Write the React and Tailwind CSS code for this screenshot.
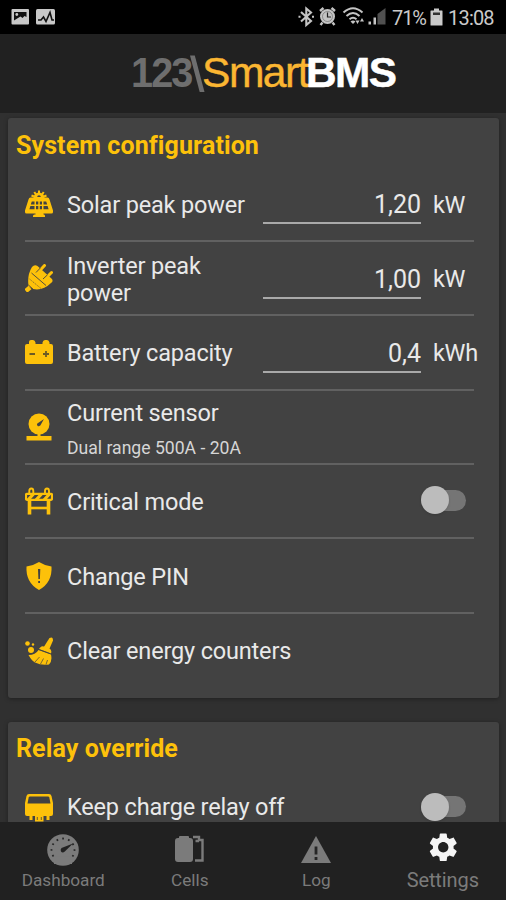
import React from 'react';

const Y = '#fdc10a';
const D = '#424242';

function Solar() {
  return (
    <svg width="28" height="28" viewBox="0 0 28 28" fill={Y}>
      <path d="M5.500 7.500H22.500Q24 7.500 24.500 9.500L28 20.500V22Q28 23.500 26.500 23.500H18.500V24.500H19Q20 24.500 20 26V27H8V26Q8 24.500 9.500 24.500H10.500V23.500H1.500Q0 23.500 0 22V20.500L3.500 9.500Q4 7.500 5.500 7.500Z" />
      <path d="M8.500 8A5.500 5.500 0 0 1 19.500 8Z" />
      <path d="M14 .5V4M9.300 2L10.800 4.300M18.700 2L17.200 4.300M6.500 5.500L9 6.500M21.500 5.500L19 6.500" stroke={Y} strokeWidth="2" />
      <path d="M12.200 7A1.800 1.800 0 0 1 15.800 7Z" fill={D} />
      <path d="M6.800 11.500H9.500V14.500H5.800ZM11 11.500H13.300V14.500H11ZM14.800 11.500H17V14.500H14.800ZM18.500 11.500H21.200L22.200 14.500H18.500ZM5.400 16H9.500V19.200H4.400ZM11 16H13.300V19.200H11ZM14.800 16H17V19.200H14.800ZM18.500 16H22.600L23.600 19.200H18.500Z" fill={D} />
    </svg>
  );
}

function Plug() {
  return (
    <svg width="28" height="28" viewBox="0 0 28 28" fill={Y}>
      <path d="M3.500 22Q2 11 7 3Q9.500 0 12.500 2L27 15Q28.500 17.500 26 19Q18 27 8 25Z" />
      <path d="M12.500 9L19.500 1.500M19.500 15.500L26.500 8.500" stroke={Y} strokeWidth="3" strokeLinecap="round" />
      <path d="M11 8.500L15.500 3.800M18 15L22.500 10.800" stroke={D} strokeWidth=".9" />
      <path d="M6.500 9L21 21.500" stroke={D} strokeWidth=".9" />
      <path d="M4.500 15L16 24.500" stroke={D} strokeWidth=".6" strokeDasharray="1.500 .8" />
      <path d="M3.500 21L8 25" stroke={D} strokeWidth=".8" />
      <path d="M.8 27L5 23.500" stroke={Y} strokeWidth="4.500" />
    </svg>
  );
}

function Battery() {
  return (
    <svg width="28" height="28" viewBox="0 0 28 28" fill={Y}>
      <path d="M4 6V4Q4 2 6 2H8Q10 2 10.500 4.500V6H17.500V4.500Q18 2 20 2H22Q24 2 24.500 4.500V6H26Q28 6 28 8V24Q28 26 26 26H2Q0 26 0 24V8Q0 6 2 6Z" />
      <path d="M4.500 16H10M18 16H24M21 13V19" stroke="#6b5a25" strokeWidth="1.800" fill="none" />
    </svg>
  );
}

function Sensor() {
  return (
    <svg width="28" height="28" viewBox="0 0 28 28" fill={Y}>
      <circle cx="14" cy="11" r="10.500" />
      <path d="M12.500 20H15.500V23H26.500V27.500H1.500V23H12.500Z" />
      <path d="M12.300 10.500L19 6L15.300 12.500Q13.500 14 12.500 12.700Q11.500 11.700 12.300 10.500Z" fill={D} />
    </svg>
  );
}

function Barrier() {
  return (
    <svg width="28" height="28" viewBox="0 0 28 28" fill="none" stroke={Y}>
      <path d="M4.300 6.500V4Q4.300 1.500 6.300 1.500Q8.300 1.500 8.300 4V6.500M20 6.500V4Q20 1.500 22 1.500Q24 1.500 24 4V6.500" strokeWidth="1.900" />
      <rect x="1" y="6.800" width="26" height="6" rx="1" strokeWidth="2.200" />
      <path d="M3 13L8.500 7M11 13L16.500 7M19 13L24.500 7" strokeWidth="3.200" />
      <path d="M4.500 13V27.500M23.500 13V27.500" strokeWidth="3.600" />
      <path d="M4.500 21H23.500" strokeWidth="2.600" />
    </svg>
  );
}

function Shield() {
  return (
    <svg width="28" height="28" viewBox="0 0 28 28" fill={Y}>
      <path d="M14 0Q20 3.800 26.500 4.500Q27.500 20.500 14 28Q.5 20.500 1.500 4.500Q8 3.800 14 0Z" />
      <path d="M13 7H15.300L14.900 17H13.400ZM13.200 19H15V21H13.200Z" fill={D} />
    </svg>
  );
}

function Broom() {
  return (
    <svg width="28" height="28" viewBox="0 0 28 28" fill={Y}>
      <path d="M24.500 1Q28 -1 28 3.500L23.500 14L17.500 12Z" />
      <path d="M16.500 9.500Q18 8.500 25 12Q27 13.500 26 16.500L14 12Q14.500 10.500 16.500 9.500Z" />
      <path d="M13.500 13L26 17.500Q27.500 24 24 27.500Q16 28.500 10 25.500Q6.500 23.500 3.500 18Q10.500 18 13.500 13Z" />
      <path d="M14 12.500L25.500 16.800M10 25L14.500 20M15.500 27L18.500 21.500M21 27.500L22.500 23" stroke={D} strokeWidth=".7" />
      <circle cx="6" cy="13" r="3" />
      <circle cx="2.500" cy="6.500" r="2.300" />
      <circle cx="8" cy="7.500" r="1.200" />
    </svg>
  );
}

function Relay() {
  return (
    <svg width="28" height="28" viewBox="0 0 28 28" fill={Y}>
      <path d="M4 0H24Q26 0 26.500 2L28 9V20Q28 22 26 22H24.500V26H21.500V22H18.500V27.500H10V22H7.500V26H4.500V22H2Q0 22 0 20V9L1.500 2Q2 0 4 0Z" />
      <path d="M5 2.500H23Q24 2.500 24.300 3.500L25.500 9.500H2.500L3.700 3.500Q4 2.500 5 2.500Z" fill={D} />
      <path d="M12.300 23V26M16.300 23V26" stroke={D} strokeWidth=".8" />
    </svg>
  );
}

function StatusIcons() {
  return (
    <svg width="90" height="22" viewBox="297 7 90 22" fill="#c4c4c4" className="shrink-0">
      <path d="M301 13L311 22L306.300 26V9.500L311 13.500L301 22.500M298.500 17.700H300.500M312 17.700H314" fill="none" stroke="#c4c4c4" strokeWidth="2.100" />
      <circle cx="327.500" cy="17.500" r="7.500" />
      <path d="M320 12L323.500 9M335 12L331.500 9M322.500 23.500L320.500 26M332.500 23.500L334.500 26" stroke="#c4c4c4" strokeWidth="2.400" />
      <path d="M327.500 13.500V18H331" fill="none" stroke="#222" strokeWidth="1.200" />
      <circle cx="327.500" cy="17.500" r="5" fill="none" stroke="#555" strokeWidth=".5" />
      <g fill="none" stroke="#c4c4c4" strokeWidth="2">
        <path d="M343.500 13.500Q353 5 362.500 13.500" />
        <path d="M346.500 17Q353 11 359.500 17" />
        <path d="M349.500 20.300Q353 17.300 356.500 20.300" />
      </g>
      <path d="M350.500 22.500Q353 20.500 355.500 22.500L353 25Z" />
      <path d="M355.500 21.500H359.500L357.500 25ZM360 22.500L362 19L364 22.500Z" />
      <path d="M368.500 22.500H371V25.500H368.500ZM373.500 18.500H376V25.500H373.500Z" />
      <path d="M377.500 15L385.500 9V25.500H377.500Z" fill="#505050" />
    </svg>
  );
}

function StatusBar() {
  return (
    <div className="flex h-[34px] shrink-0 items-center bg-black text-[#cacaca]">
      <svg width="46" height="18" viewBox="0 0 46 18" className="ml-[11px]">
        <rect x="0.500" y="1" width="17.500" height="15.500" rx="1" fill="#c8c8c8" />
        <path d="M3 4H15.500V9L13.500 8L11.500 10L9.500 8.500L7 10L3 12.500Z" fill="#111" />
        <circle cx="5.800" cy="6.500" r="1.400" fill="#c8c8c8" />
        <rect x="25" y="1" width="19" height="15.500" rx="1.500" fill="#c8c8c8" />
        <path d="M27 12H30L32.500 9L35 13.500L39 4.500L41 12H43" fill="none" stroke="#111" strokeWidth="1.600" />
      </svg>
      <div className="ml-auto flex items-center">
        <StatusIcons />
        <span className="ml-[5px] mt-[2px] w-[33px] whitespace-nowrap text-[20px] tracking-[-1.100px]">71%</span>
        <svg width="13" height="18" viewBox="0 0 13 18" className="ml-[5px]">
          <path d="M4 0.500H9V2.500H12Q12.500 2.500 12.500 3V17Q12.500 17.500 12 17.500H1Q.5 17.500 .5 17V3Q.5 2.500 1 2.500H4Z" fill="#cacaca" />
          <path d="M3 4.500H10V7H3Z" fill="#333" />
        </svg>
        <span className="ml-[5px] mr-[11px] mt-[2px] w-[47px] whitespace-nowrap text-[20px] tracking-[-0.800px]">13:08</span>
      </div>
    </div>
  );
}

function Logo() {
  return (
    <svg width="270" height="50" viewBox="130 48 270 50" fontFamily="'Liberation Sans', Arial, sans-serif" fontSize="42">
      <text x="131" y="86.500" fontWeight="700" fill="#6e6e6e" letterSpacing="-2" textLength="60.500" lengthAdjust="spacingAndGlyphs">123</text>
      <path d="M190 55.500H194.800L204.500 92H199.700Z" fill="#6e6e6e" />
      <text x="202" y="86.500" fill="#fbb632" stroke="#fbb632" strokeWidth=".4" letterSpacing="-1.500" textLength="106" lengthAdjust="spacingAndGlyphs">Smart</text>
      <text x="306" y="86.500" fontWeight="700" fill="#fff" stroke="#fff" strokeWidth=".5" letterSpacing="-1.500" textLength="89.500" lengthAdjust="spacingAndGlyphs">BMS</text>
    </svg>
  );
}

function Toggle() {
  return (
    <span className="relative mr-[8px] mt-[-2px] flex h-[28px] w-[45px] items-center justify-end">
      <span className="h-[21px] w-[36px] rounded-full bg-[#757575]" />
      <span className="absolute left-0 top-0 h-[28px] w-[28px] rounded-full bg-[#bcbcbc] shadow-sm" />
    </span>
  );
}

function Row({ icon, label, sub, value, unit, toggle, last }) {
  return (
    <div className={`flex h-[74.400px] items-center ${last ? '' : 'border-b-2 border-[#616161]'}`}>
      <span className="flex h-[28px] w-[28px] shrink-0">{icon}</span>
      <div className={`ml-[14px] text-[23.500px] leading-[27px] tracking-[-0.170px] ${sub ? 'pt-[7px]' : last ? '' : 'pt-[3px]'} ${value ? 'w-[190px] shrink-0' : 'flex-1 whitespace-nowrap'}`}>
        <div>{label}</div>
        {sub && <div className="mt-[9px] text-[17.600px] leading-[25px] tracking-normal text-[#d6d6d6]">{sub}</div>}
      </div>
      {value && (
        <>
          <div className="ml-[6px] mt-[1px] h-[40px] w-[158px] shrink-0 border-b-2 border-[#a9a9a9] text-right leading-[41px]">
            <span className="text-[25px]">{value}</span>
          </div>
          <span className="-mr-[8px] ml-[12px] shrink-0 pt-[3px] text-[23.500px] tracking-[-0.300px]">{unit}</span>
        </>
      )}
      {toggle && <Toggle />}
    </div>
  );
}

function Card({ title, className, children }) {
  return (
    <section className={`mr-[7px] ml-[8px] shrink-0 rounded-[3px] bg-[#424242] pl-[17px] pr-[25px] shadow-[0_1px_4px_rgba(0,0,0,0.350)] ${className}`}>
      <h2 className="-ml-[9px] h-[48.500px] pt-[11px] text-[25px] font-bold leading-[31px] tracking-[0.100px] text-[#fdc10a]">{title}</h2>
      {children}
    </section>
  );
}

function Tab({ label, active, children }) {
  return (
    <div className="flex w-[126.500px] flex-col items-center">
      <div className="flex h-[44px] items-end justify-center">{children}</div>
      <span className={`flex h-[28px] items-center ${active ? 'text-[20px] tracking-[-0.100px]' : 'pt-[2px] text-[17.200px]'}`}>{label}</span>
    </div>
  );
}

function NavBar() {
  return (
    <nav className="flex h-[78px] shrink-0 bg-[#212121] text-[#7b7b7b]">
      <Tab label="Dashboard">
        <svg width="32" height="32" viewBox="0 0 32 32">
          <circle cx="16" cy="16" r="15.800" fill="#7b7b7b" />
          <circle cx="16" cy="16" r="11.500" fill="none" stroke="#282828" strokeWidth="1.800" strokeDasharray="1.800 4.222" pathLength="72.260" transform="rotate(-4 16 16)" />
          <path d="M7 22.500H25V30H7Z" fill="#7b7b7b" />
          <path d="M14.500 14L26 9.500L17.800 17.500Q15.500 19.500 14 17.500Q13 15.500 14.500 14Z" fill="#222" />
        </svg>
      </Tab>
      <Tab label="Cells">
        <svg width="29" height="30" viewBox="0 0 29 30" className="mb-[1px]">
          <path d="M3 3H4V2Q4 1 5 1H13Q14 1 14 2V3H15Q18 3 18 6V24Q18 27 15 27H3Q0 27 0 24V6Q0 3 3 3Z" fill="#7b7b7b" />
          <path d="M18 2H24V5H27.500V25.500H20M20.500 6H24" fill="none" stroke="#7b7b7b" strokeWidth="2.400" />
        </svg>
      </Tab>
      <Tab label="Log">
        <svg width="30" height="30" viewBox="0 0 30 30" className="mb-[1px]">
          <path d="M15 1L30 28H0Z" fill="#7b7b7b" />
          <path d="M13.600 11.500H16.400V19.500H13.600ZM13.600 22H16.400V25H13.600Z" fill="#252525" />
        </svg>
      </Tab>
      <Tab label="Settings" active>
        <svg width="34.500" height="34.500" viewBox="0 0 24 24" className="mb-[2px]" fill="#f5f5f5">
          <path d="M19.140 12.940c.04-.3.060-.61.060-.94 0-.32-.02-.64-.07-.94l2.030-1.580c.18-.14.230-.41.120-.61l-1.920-3.320c-.12-.22-.37-.29-.59-.22l-2.390.96c-.5-.38-1.030-.7-1.620-.94l-.36-2.540c-.04-.24-.24-.41-.48-.41h-3.840c-.24 0-.43.170-.47.410l-.36 2.540c-.59.240-1.130.570-1.620.940l-2.390-.96c-.22-.08-.47 0-.59.220L2.740 8.870c-.12.210-.08.470.120.610l2.030 1.580c-.05.300-.09.630-.09.940s.02.640.070.940l-2.030 1.580c-.18.140-.23.410-.12.610l1.920 3.320c.12.220.370.290.590.220l2.390-.96c.5.380 1.030.700 1.620.940l.36 2.540c.05.240.240.410.480.410h3.840c.24 0 .44-.17.470-.41l.36-2.540c.59-.24 1.130-.56 1.620-.94l2.390.96c.22.080.470 0 .59-.22l1.920-3.320c.12-.22.070-.47-.12-.61l-2.010-1.580zM12 15.600c-1.980 0-3.600-1.620-3.600-3.600s1.620-3.600 3.600-3.600 3.600 1.620 3.600 3.600-1.620 3.600-3.600 3.600z" />
        </svg>
      </Tab>
    </nav>
  );
}

export default function App() {
  return (
    <div className="flex h-[900px] w-[506px] flex-col overflow-hidden bg-[#303030] font-['Roboto',sans-serif] text-[#e9e9e9]">
      <StatusBar />
      <header className="flex h-[79px] shrink-0 justify-center bg-[#212121] pl-[24px] pt-[14px]">
        <Logo />
      </header>
      <main className="flex min-h-0 flex-1 flex-col overflow-hidden pt-[5px]">
        <Card title="System configuration" className="h-[580px] pt-px">
          <Row icon={<Solar />} label="Solar peak power" value="1,20" unit="kW" />
          <Row icon={<Plug />} label="Inverter peak power" value="1,00" unit="kW" />
          <Row icon={<Battery />} label="Battery capacity" value="0,4" unit="kWh" />
          <Row icon={<Sensor />} label="Current sensor" sub="Dual range 500A - 20A" />
          <Row icon={<Barrier />} label="Critical mode" toggle />
          <Row icon={<Shield />} label="Change PIN" />
          <Row icon={<Broom />} label="Clear energy counters" last />
        </Card>
        <Card title="Relay override" className="mt-[24px] h-[140px]">
          <Row icon={<Relay />} label="Keep charge relay off" toggle last />
        </Card>
      </main>
      <NavBar />
    </div>
  );
}
